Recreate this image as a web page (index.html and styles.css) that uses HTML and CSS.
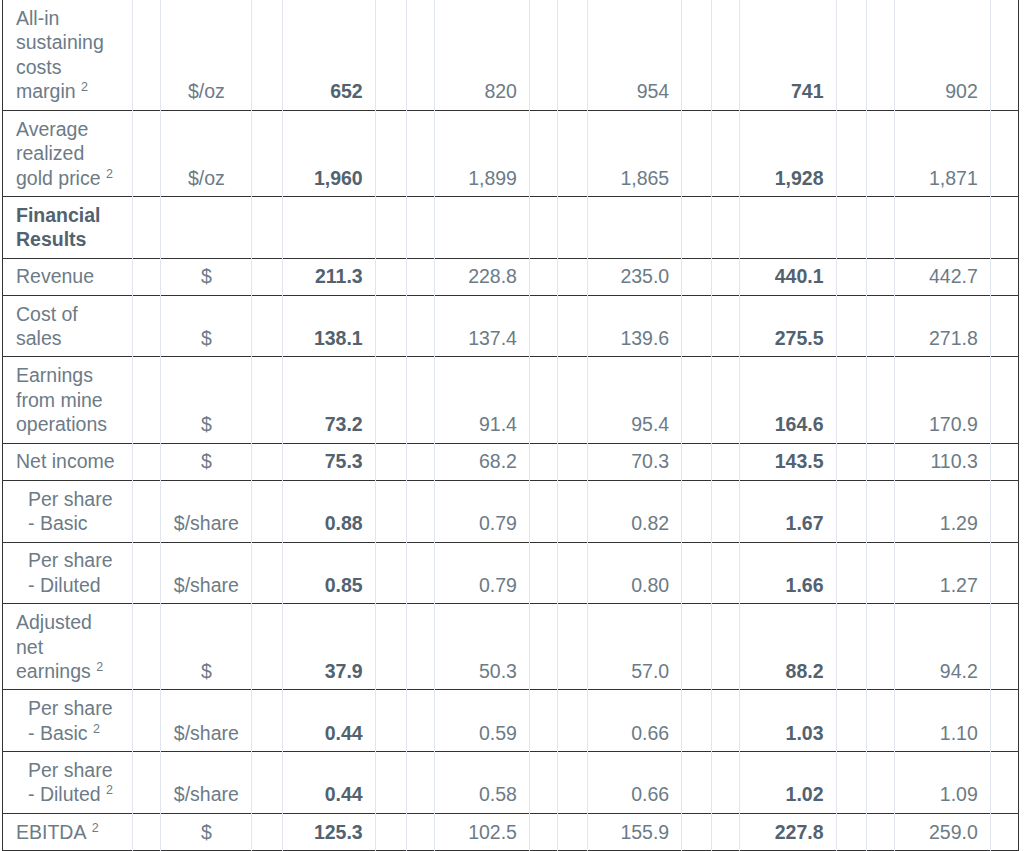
FILE: index.html
```html
<!DOCTYPE html>
<html lang="en">
<head>
<meta charset="utf-8">
<title>Financial Results</title>
<link rel="stylesheet" href="styles.css">
</head>
<body>
<table class="fin">
  <colgroup>
    <col class="c-label"><col class="c-sp"><col class="c-unit"><col class="c-sp2">
    <col class="c-v1"><col class="c-sp3"><col class="c-sp"><col class="c-v2">
    <col class="c-sp"><col class="c-sp2"><col class="c-v3"><col class="c-sp2">
    <col class="c-sp"><col class="c-v4"><col class="c-sp2"><col class="c-sp"><col class="c-v4"><col class="c-sp">
  </colgroup>
  <tbody>
    <tr>
      <td class="label">All-in sustaining costs margin&nbsp;<sup>2</sup></td><td></td><td class="unit">$/oz</td><td></td>
      <td class="num b">652</td><td></td><td></td><td class="num">820</td><td></td><td></td><td class="num">954</td><td></td><td></td><td class="num b">741</td><td></td><td></td><td class="num">902</td><td></td>
    </tr>
    <tr>
      <td class="label">Average realized gold price&nbsp;<sup>2</sup></td><td></td><td class="unit">$/oz</td><td></td>
      <td class="num b">1,960</td><td></td><td></td><td class="num">1,899</td><td></td><td></td><td class="num">1,865</td><td></td><td></td><td class="num b">1,928</td><td></td><td></td><td class="num">1,871</td><td></td>
    </tr>
    <tr>
      <td class="label head">Financial Results</td><td></td><td class="unit"></td><td></td>
      <td></td><td></td><td></td><td></td><td></td><td></td><td></td><td></td><td></td><td></td><td></td><td></td><td></td><td></td>
    </tr>
    <tr>
      <td class="label">Revenue</td><td></td><td class="unit">$</td><td></td>
      <td class="num b">211.3</td><td></td><td></td><td class="num">228.8</td><td></td><td></td><td class="num">235.0</td><td></td><td></td><td class="num b">440.1</td><td></td><td></td><td class="num">442.7</td><td></td>
    </tr>
    <tr>
      <td class="label">Cost of sales</td><td></td><td class="unit">$</td><td></td>
      <td class="num b">138.1</td><td></td><td></td><td class="num">137.4</td><td></td><td></td><td class="num">139.6</td><td></td><td></td><td class="num b">275.5</td><td></td><td></td><td class="num">271.8</td><td></td>
    </tr>
    <tr>
      <td class="label">Earnings from mine operations</td><td></td><td class="unit">$</td><td></td>
      <td class="num b">73.2</td><td></td><td></td><td class="num">91.4</td><td></td><td></td><td class="num">95.4</td><td></td><td></td><td class="num b">164.6</td><td></td><td></td><td class="num">170.9</td><td></td>
    </tr>
    <tr>
      <td class="label">Net income</td><td></td><td class="unit">$</td><td></td>
      <td class="num b">75.3</td><td></td><td></td><td class="num">68.2</td><td></td><td></td><td class="num">70.3</td><td></td><td></td><td class="num b">143.5</td><td></td><td></td><td class="num">110.3</td><td></td>
    </tr>
    <tr>
      <td class="label sub">Per share - Basic</td><td></td><td class="unit">$/share</td><td></td>
      <td class="num b">0.88</td><td></td><td></td><td class="num">0.79</td><td></td><td></td><td class="num">0.82</td><td></td><td></td><td class="num b">1.67</td><td></td><td></td><td class="num">1.29</td><td></td>
    </tr>
    <tr>
      <td class="label sub">Per share - Diluted</td><td></td><td class="unit">$/share</td><td></td>
      <td class="num b">0.85</td><td></td><td></td><td class="num">0.79</td><td></td><td></td><td class="num">0.80</td><td></td><td></td><td class="num b">1.66</td><td></td><td></td><td class="num">1.27</td><td></td>
    </tr>
    <tr>
      <td class="label">Adjusted net earnings&nbsp;<sup>2</sup></td><td></td><td class="unit">$</td><td></td>
      <td class="num b">37.9</td><td></td><td></td><td class="num">50.3</td><td></td><td></td><td class="num">57.0</td><td></td><td></td><td class="num b">88.2</td><td></td><td></td><td class="num">94.2</td><td></td>
    </tr>
    <tr>
      <td class="label sub">Per share - Basic&nbsp;<sup>2</sup></td><td></td><td class="unit">$/share</td><td></td>
      <td class="num b">0.44</td><td></td><td></td><td class="num">0.59</td><td></td><td></td><td class="num">0.66</td><td></td><td></td><td class="num b">1.03</td><td></td><td></td><td class="num">1.10</td><td></td>
    </tr>
    <tr>
      <td class="label sub">Per share - Diluted&nbsp;<sup>2</sup></td><td></td><td class="unit">$/share</td><td></td>
      <td class="num b">0.44</td><td></td><td></td><td class="num">0.58</td><td></td><td></td><td class="num">0.66</td><td></td><td></td><td class="num b">1.02</td><td></td><td></td><td class="num">1.09</td><td></td>
    </tr>
    <tr>
      <td class="label">EBITDA&nbsp;<sup>2</sup></td><td></td><td class="unit">$</td><td></td>
      <td class="num b">125.3</td><td></td><td></td><td class="num">102.5</td><td></td><td></td><td class="num">155.9</td><td></td><td></td><td class="num b">227.8</td><td></td><td></td><td class="num">259.0</td><td></td>
    </tr>
    <tr class="tail">
      <td class="label"></td><td></td><td class="unit"></td><td></td>
      <td class="num b"></td><td></td><td></td><td class="num"></td><td></td><td></td><td class="num"></td><td></td><td></td><td class="num b"></td><td></td><td></td><td class="num"></td><td></td>
    </tr>
  </tbody>
</table>
</body>
</html>
```

FILE: styles.css
```css
html, body {
  margin: 0;
  padding: 0;
  background: #ffffff;
}

body {
  font-family: "Liberation Sans", Arial, Helvetica, sans-serif;
  font-size: 19.5px;
  color: #6c7b87;
}

.fin {
  border-collapse: collapse;
  table-layout: fixed;
  width: 1017px;
  margin: -1px 0 0 2px;
  border-left: 1px solid #333333;
  border-right: 1px solid #333333;
}

.c-label { width: 130px; }
.c-sp { width: 28px; }
.c-sp2 { width: 30px; }
.c-sp3 { width: 31px; }
.c-unit { width: 91px; }
.c-v1 { width: 93px; }
.c-v2 { width: 95px; }
.c-v3 { width: 94px; }
.c-v4 { width: 96px; }

.fin tr {
  border-top: 1px solid #333333;
  border-bottom: 1px solid #333333;
}

.fin td {
  border-left: 1px solid #e2e7ef;
  border-right: 1px solid #e2e7ef;
  padding: 5.85px 0;
  line-height: 24.5px;
  vertical-align: bottom;
}

.fin .tail td {
  height: 24.5px;
}

.fin td:first-child {
  border-left: 1px solid #333333;
}

.fin td:last-child {
  border-right: 1px solid #333333;
}

.label {
  padding-left: 13px !important;
  padding-right: 13px !important;
  text-align: left;
}

.label.sub {
  padding-left: 25px !important;
}

.label.head {
  font-weight: bold;
  color: #52626f;
}

.unit {
  text-align: center;
}

.num {
  text-align: right;
  padding-right: 12px !important;
}

.num.b {
  font-weight: bold;
  color: #52626f;
}

sup {
  font-size: 12.5px;
  line-height: 0;
  vertical-align: 7px;
}
```
